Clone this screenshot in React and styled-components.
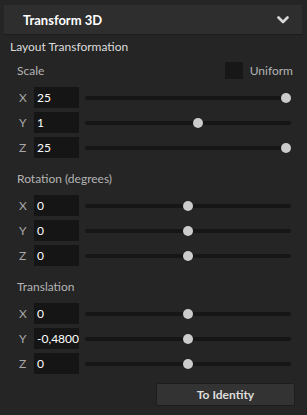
import React from "react";
import styled, { createGlobalStyle } from "styled-components";

const GlobalStyle = createGlobalStyle`
  html, body {
    margin: 0;
    padding: 0;
    background: #252525;
  }
  body {
    font-family: "Segoe UI", Lato, "Noto Sans", sans-serif;
    font-size: 12px;
  }
`;

const sections = [
  {
    title: "Scale",
    uniform: true,
    rows: [
      { axis: "X", value: "25", pos: 1 },
      { axis: "Y", value: "1", pos: 0.55 },
      { axis: "Z", value: "25", pos: 1 },
    ],
  },
  {
    title: "Rotation (degrees)",
    rows: [
      { axis: "X", value: "0", pos: 0.5 },
      { axis: "Y", value: "0", pos: 0.5 },
      { axis: "Z", value: "0", pos: 0.5 },
    ],
  },
  {
    title: "Translation",
    rows: [
      { axis: "X", value: "0", pos: 0.5 },
      { axis: "Y", value: "-0,4800", pos: 0.5 },
      { axis: "Z", value: "0", pos: 0.5 },
    ],
  },
];

const Chevron = () => (
  <svg width="12" height="8" viewBox="0 0 12 8">
    <path d="M1.5 1.5 L6 6 L10.5 1.5" fill="none" stroke="#d8d8d8" strokeWidth="2.6" strokeLinecap="round" strokeLinejoin="round" />
  </svg>
);

const App = () => (
  <>
    <GlobalStyle />
    <Panel>
      <Header>
        <HeaderTitle>Transform 3D</HeaderTitle>
        <Chevron />
      </Header>
      <GroupTitle>Layout Transformation</GroupTitle>
      {sections.map((section, i) => (
        <Section key={section.title} first={i === 0}>
          <SectionHead>
            <SectionTitle>{section.title}</SectionTitle>
            {section.uniform && (
              <UniformBox>
                <Check />
                <UniformLabel>Uniform</UniformLabel>
              </UniformBox>
            )}
          </SectionHead>
          <Rows>
            {section.rows.map((row) => (
              <Row key={row.axis}>
                <Axis>{row.axis}</Axis>
                <ValueBox>{row.value}</ValueBox>
                <Track>
                  <Thumb style={{ left: `calc(${row.pos} * (100% - 10px))` }} />
                </Track>
              </Row>
            ))}
          </Rows>
        </Section>
      ))}
      <Footer>
        <Button>To Identity</Button>
      </Footer>
    </Panel>
  </>
);

export default App;

const Panel = styled.div`
  width: 307px;
  height: 415px;
  box-sizing: border-box;
  padding: 5px 5px 0 4px;
  background: #252525;
  overflow: hidden;
`;

const Header = styled.div`
  height: 30px;
  box-sizing: border-box;
  background: #2e2e2e;
  border-bottom: 1px solid #1c1c1c;
  display: flex;
  align-items: center;
  justify-content: space-between;
  padding: 0 13px 0 19px;
`;

const HeaderTitle = styled.span`
  color: #ffffff;
  font-weight: bold;
  font-size: 13px;
`;

const GroupTitle = styled.div`
  color: #dcdcdc;
  padding: 3px 0 0 6px;
  height: 17px;
  line-height: 17px;
`;

const Section = styled.div`
  padding: 0 0 0 13px;
  margin-top: ${({ first }) => (first ? "6px" : "11px")};
`;

const SectionHead = styled.div`
  display: flex;
  align-items: center;
  justify-content: space-between;
  height: 18px;
  padding-right: 9px;
`;

const SectionTitle = styled.span`
  color: #b4b4b4;
`;

const UniformBox = styled.label`
  display: flex;
  align-items: center;
  gap: 7px;
  color: #b4b4b4;
`;

const Check = styled.span`
  width: 18px;
  height: 17px;
  background: #171717;
`;

const UniformLabel = styled.span``;

const Rows = styled.div`
  display: flex;
  flex-direction: column;
  gap: 4px;
  margin-top: 8px;
`;

const Row = styled.div`
  display: flex;
  align-items: center;
  height: 21px;
`;

const Axis = styled.span`
  width: 17px;
  color: #a8a8a8;
  padding-left: 2px;
  box-sizing: border-box;
`;

const ValueBox = styled.div`
  width: 45px;
  height: 21px;
  box-sizing: border-box;
  background: #151515;
  color: #ffffff;
  padding: 0 2px 0 3px;
  line-height: 21px;
  overflow: hidden;
  white-space: nowrap;
`;

const Track = styled.div`
  position: relative;
  flex: 1;
  height: 4px;
  margin: 0 11px 0 6px;
  border-radius: 2px;
  background: #161616;
`;

const Thumb = styled.span`
  position: absolute;
  top: 50%;
  width: 10px;
  height: 10px;
  border-radius: 50%;
  background: #cccccc;
  transform: translateY(-50%);
`;

const Footer = styled.div`
  display: flex;
  justify-content: flex-end;
  padding: 9px 7px 0 0;
`;

const Button = styled.button`
  width: 139px;
  height: 23px;
  background: #333333;
  border: 1px solid #1d1d1d;
  border-radius: 2px;
  color: #dedede;
  font-family: inherit;
  font-size: 12px;
  font-weight: bold;
`;
